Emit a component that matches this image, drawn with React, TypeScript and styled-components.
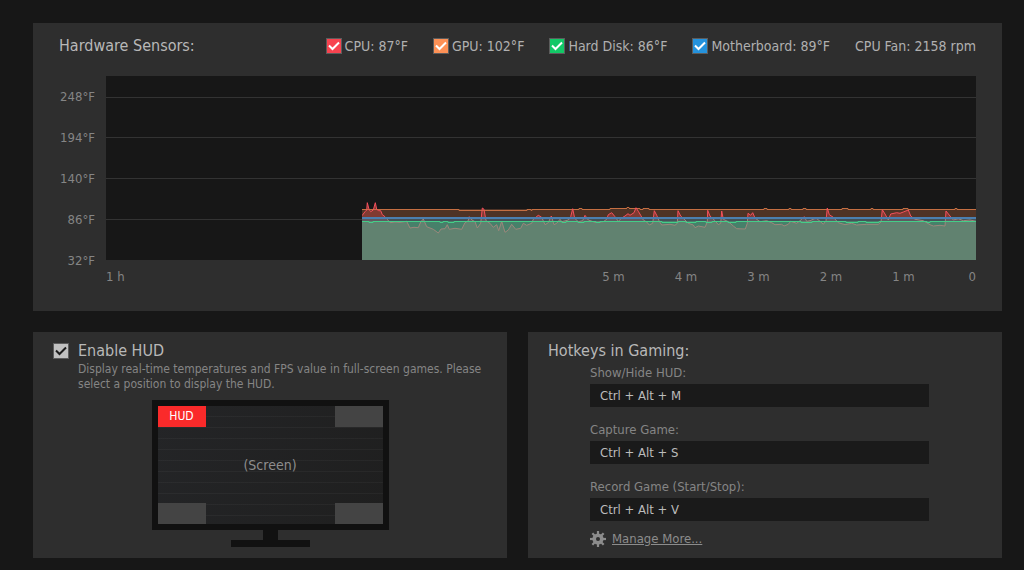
import React, { useState } from "react";
import styled, { createGlobalStyle } from "styled-components";

const GlobalStyle = createGlobalStyle`
  *, *::before, *::after { box-sizing: border-box; }
  body {
    margin: 0;
    background: #171717;
    color: #b0b0b0;
    font-family: "DejaVu Sans Condensed", "Noto Sans", sans-serif;
    font-size: 13px;
    line-height: 16px;
  }
`;

const Page = styled.main`
  display: grid;
  grid-template-columns: 1fr 1fr;
  gap: 21px;
  padding: 23px 22px 12px 33px;
`;

const Panel = styled.section<{ $wide?: boolean }>`
  grid-column: ${(p) => (p.$wide ? "1 / -1" : "auto")};
  background: #2e2e2e;
  padding: ${(p) => (p.$wide ? "12px 26px 26px" : "8px 20px 11px 20px")};
`;

const Title = styled.h2`
  margin: 0;
  font-size: 16px;
  line-height: 22px;
  font-weight: 400;
  color: #b8b8b8;
`;

const SensorHeader = styled.header`
  display: flex;
  align-items: center;
  justify-content: space-between;
  padding-bottom: 19px;
`;

const Legend = styled.div`
  display: flex;
  align-items: center;
  gap: 25px;
  font-size: 14px;
  line-height: 22px;
  white-space: nowrap;
`;

const CheckLabel = styled.label<{ $gap: number }>`
  display: flex;
  align-items: center;
  gap: ${(p) => p.$gap}px;
`;

const CheckCell = styled.span`
  display: grid;
  width: 16px;
  height: 16px;

  & > * {
    grid-area: 1 / 1;
  }
  & > svg {
    pointer-events: none;
  }
`;

const CheckInput = styled.input<{ $color: string }>`
  appearance: none;
  margin: 0;
  width: 16px;
  height: 16px;
  background: ${(p) => p.$color};
  border: 1px solid #5c5c5c;
`;

const ChartGrid = styled.div`
  display: grid;
  grid-template-columns: 36px minmax(0, 1fr);
  column-gap: 11px;
`;

const TempAxis = styled.div`
  display: flex;
  flex-direction: column;
  gap: 25px;
  padding-top: 13px;
  text-align: right;
  white-space: nowrap;
  color: #858585;
`;

const Plot = styled.svg`
  display: block;
  width: 100%;
  height: 184px;
  background: #171717;
`;

const TimeAxis = styled.div`
  grid-column: 2;
  display: grid;
  grid-template-columns: minmax(0, 13fr) repeat(5, minmax(0, 2fr)) minmax(0, 1fr);
  text-align: center;
  color: #858585;

  & > :first-child {
    text-align: left;
  }
  & > :last-child {
    text-align: right;
  }
`;

const Description = styled.p`
  margin: 0 0 8px 25px;
  font-size: 12px;
  line-height: 15px;
  color: #858585;
`;

const Monitor = styled.div`
  display: flex;
  flex-direction: column;
  align-items: center;
`;

const Screen = styled.div`
  display: grid;
  grid-template-columns: 48px 1fr 48px;
  grid-template-rows: 21px 1fr 21px;
  width: 237px;
  height: 130px;
  border: 6px solid #111111;
  background:
    repeating-linear-gradient(transparent 0 10px, rgba(255, 255, 255, 0.035) 10px 11px),
    linear-gradient(110deg, #242527, #1f1f1f);
`;

const Corner = styled.button<{ $row: number; $col: number; $active: boolean }>`
  grid-row: ${(p) => p.$row};
  grid-column: ${(p) => p.$col};
  padding: 0;
  border: 0;
  font: inherit;
  font-size: 12px;
  line-height: 21px;
  color: #ffffff;
  background: ${(p) => (p.$active ? "#fa2a2a" : "#444444")};
`;

const ScreenCaption = styled.span`
  grid-area: 2 / 2;
  align-self: center;
  text-align: center;
  font-size: 14px;
  color: #8e8e8e;
`;

const Neck = styled.div`
  width: 15px;
  height: 10px;
  background: #111111;
`;

const Base = styled.div`
  width: 79px;
  height: 7px;
  background: #111111;
`;

const HotkeyList = styled.div`
  display: flex;
  flex-direction: column;
  gap: 16px;
  padding: 4px 53px 0 42px;
`;

const Field = styled.div`
  display: flex;
  flex-direction: column;
  gap: 4px;
`;

const FieldLabel = styled.label`
  line-height: 14px;
  color: #858585;
`;

const HotkeyInput = styled.input`
  width: 100%;
  height: 23px;
  padding: 0 10px;
  border: 0;
  background: #1a1a1a;
  color: #bcbcbc;
  font: inherit;
`;

const ManageRow = styled.div`
  display: flex;
  align-items: center;
  gap: 6px;
  padding: 10px 0 0 42px;
`;

const ManageLink = styled.a`
  color: #8c8c8c;
  text-decoration: underline;
`;

type Sample = [number, number];

// Samples are kept at three units per chart unit.
const place = (offset: number, samples: Sample[]): Sample[] =>
  samples.map(([x, y]) => [offset + x / 3, 114 + y / 3]);

const cpuTrace: Sample[] = [
  ...place(244, [
    [36, 77], [45, 65], [50, 60], [52, 38], [57, 58], [62, 65], [70, 60], [76, 38], [80, 58], [86, 62],
    [92, 62], [97, 74], [105, 80], [112, 88], [120, 98], [135, 96], [150, 97], [170, 94], [180, 114],
    [192, 112], [205, 113], [212, 96], [220, 87], [230, 110], [240, 114], [250, 118], [265, 129],
    [273, 117], [285, 116], [292, 104], [298, 118], [315, 115], [335, 118], [345, 98], [355, 92],
    [358, 80], [366, 90], [375, 95], [382, 114], [392, 100], [397, 54], [402, 58], [408, 92], [420, 100],
    [430, 112], [440, 104], [446, 122], [455, 94], [465, 127], [475, 120], [485, 103], [497, 118],
    [512, 115], [520, 100], [530, 106], [545, 100], [550, 88], [565, 76], [575, 82], [585, 104],
    [595, 98], [604, 78], [612, 104], [620, 100], [630, 88],
  ]),
  ...place(454, [
    [5, 95], [25, 90], [32, 80], [38, 56], [44, 85], [55, 95], [68, 92], [75, 76], [85, 90], [105, 97],
    [130, 95], [140, 88], [145, 74], [155, 68], [165, 80], [175, 94], [185, 84], [195, 78], [204, 71],
    [210, 76], [222, 68], [228, 53], [235, 64], [242, 76], [250, 90], [260, 96], [268, 105], [278, 100],
    [283, 62], [290, 76], [298, 94], [305, 105], [330, 103], [345, 106], [352, 100], [354, 62],
    [362, 78], [375, 90], [385, 100], [400, 105], [405, 113], [415, 108], [435, 112], [442, 96],
    [443, 61], [450, 78], [465, 92], [475, 104], [482, 100], [485, 63], [490, 88], [505, 95],
    [520, 108], [530, 116], [556, 117], [562, 100], [564, 70], [572, 76], [578, 68], [585, 84],
    [600, 95], [620, 92],
  ]),
  ...place(664, [
    [5, 98], [15, 104], [35, 103], [42, 108], [55, 103], [62, 94], [80, 100], [90, 92], [103, 80],
    [110, 94], [120, 92], [138, 84], [150, 94], [160, 103], [168, 92], [172, 54], [178, 74], [190, 82],
    [205, 98], [225, 104], [245, 100], [260, 105], [290, 103], [325, 103], [333, 96], [337, 59],
    [345, 72], [355, 90], [362, 72], [380, 68], [390, 70], [400, 66], [415, 60], [422, 78], [435, 88],
    [460, 92], [480, 104], [490, 108], [510, 106], [525, 108], [528, 63], [540, 78], [550, 90],
    [565, 86], [580, 92], [600, 90], [618, 94],
  ]),
];

const cpuPoints = cpuTrace.map(([x, y]) => `${x.toFixed(1)},${y.toFixed(1)}`).join(" ");
const cpuArea = `256,184 ${cpuPoints} 870,184`;
const gpuLine =
  "M256 133.5H353V134.5H421V133.5H425V134.5H426V133.5H473V132.5H476V133.5H504V132.5H521V131.5H523V132.5H534V133.5H537V132.5H543V133.5H658V132.5H661V133.5H683V132.5H685V133.5H697V132.5H700V133.5H736V132.5H742V133.5H765V132.5H767V133.5H797V132.5H802V133.5H849V132.5H851V133.5H870";
const diskLine =
  "M256 145.5H263V146.5H267V145.5H334V146.5H337V145.5H342V146.5H348V145.5H456V146.5H460V145.5H472V146.5H478V145.5H490V146.5H494V145.5H556V146.5H572V145.5H580V146.5H590V145.5H600V146.5H606V145.5H622V146.5H630V145.5H695V146.5H706V145.5H740V146.5H752V145.5H760V146.5H773V145.5H821V146.5H824V145.5H870";

function SensorPlot() {
  return (
    <Plot viewBox="0 0 870 184" preserveAspectRatio="none" role="img" aria-label="Sensor temperatures over the last hour">
      <defs>
        <clipPath id="above-board">
          <rect x="256" y="0" width="614" height="142" />
        </clipPath>
        <clipPath id="below-board">
          <rect x="256" y="142" width="614" height="42" />
        </clipPath>
      </defs>
      <g fill="#333333">
        <rect y="21" width="870" height="1" />
        <rect y="61" width="870" height="1" />
        <rect y="102" width="870" height="1" />
        <rect y="143" width="870" height="1" />
      </g>
      <rect x="256" y="133" width="614" height="9" fill="#4e3326" />
      <rect x="256" y="142" width="614" height="3" fill="#455259" />
      <rect x="256" y="145" width="614" height="39" fill="#47806a" />
      <polygon points={cpuArea} fill="#803a32" clipPath="url(#above-board)" />
      <polygon points={cpuArea} fill="rgba(250, 142, 146, 0.15)" clipPath="url(#below-board)" />
      <path d={gpuLine} fill="none" stroke="#c56f42" strokeWidth="1" />
      <polyline points={cpuPoints} fill="none" stroke="#f5505c" strokeWidth="1" clipPath="url(#above-board)" />
      <polyline points={cpuPoints} fill="none" stroke="#9c877c" strokeWidth="1" clipPath="url(#below-board)" />
      <rect x="256" y="141" width="614" height="2" fill="#4b7fb0" />
      <path d={diskLine} fill="none" stroke="#44cd88" strokeWidth="1" />
    </Plot>
  );
}

interface CheckProps {
  label: string;
  color: string;
  mark?: string;
  gap?: number;
  children?: React.ReactNode;
}

function Check({ label, color, mark = "#ffffff", gap = 3, children }: CheckProps) {
  const [checked, setChecked] = useState(true);
  return (
    <CheckLabel $gap={gap}>
      <CheckCell>
        <CheckInput type="checkbox" $color={color} checked={checked} onChange={() => setChecked(!checked)} />
        {checked && (
          <svg width="16" height="16" viewBox="0 0 16 16" fill="none" stroke={mark} strokeWidth="2" aria-hidden="true">
            <path d="M3 7.5 L6.5 11 L13 4.5" />
          </svg>
        )}
      </CheckCell>
      {children ?? label}
    </CheckLabel>
  );
}

const sensors = [
  { label: "CPU: 87°F", color: "#f7434f" },
  { label: "GPU: 102°F", color: "#fd9156" },
  { label: "Hard Disk: 86°F", color: "#12c866" },
  { label: "Motherboard: 89°F", color: "#2592dc" },
];

const temps = ["248°F", "194°F", "140°F", "86°F", "32°F"];
const times = ["1 h", "5 m", "4 m", "3 m", "2 m", "1 m", "0"];

const corners = [
  { name: "Top left", row: 1, col: 1 },
  { name: "Top right", row: 1, col: 3 },
  { name: "Bottom left", row: 3, col: 1 },
  { name: "Bottom right", row: 3, col: 3 },
];

const hotkeys = [
  { id: "hud", label: "Show/Hide HUD:", keys: "Ctrl + Alt + M" },
  { id: "capture", label: "Capture Game:", keys: "Ctrl + Alt + S" },
  { id: "record", label: "Record Game (Start/Stop):", keys: "Ctrl + Alt + V" },
];

function GearIcon() {
  return (
    <svg width="16" height="16" viewBox="0 0 16 16" aria-hidden="true">
      <g fill="#8c8c8c">
        {[0, 45, 90, 135].map((angle) => (
          <rect key={angle} x="6.9" y="0" width="2.2" height="16" transform={`rotate(${angle} 8 8)`} />
        ))}
        <circle cx="8" cy="8" r="5.6" />
      </g>
      <circle cx="8" cy="8" r="2" fill="#2e2e2e" />
    </svg>
  );
}

export default function App() {
  const [position, setPosition] = useState("Top left");

  return (
    <>
      <GlobalStyle />
      <Page>
        <Panel $wide>
          <SensorHeader>
            <Title>Hardware Sensors:</Title>
            <Legend>
              {sensors.map((s) => (
                <Check key={s.label} label={s.label} color={s.color} />
              ))}
              <span>CPU Fan: 2158 rpm</span>
            </Legend>
          </SensorHeader>
          <ChartGrid>
            <TempAxis>
              {temps.map((t) => (
                <span key={t}>{t}</span>
              ))}
            </TempAxis>
            <SensorPlot />
            <TimeAxis>
              {times.map((t) => (
                <span key={t}>{t}</span>
              ))}
            </TimeAxis>
          </ChartGrid>
        </Panel>

        <Panel>
          <Check label="Enable HUD" color="#c0c0c0" mark="#1c1c1c" gap={9}>
            <Title>Enable HUD</Title>
          </Check>
          <Description>
            Display real-time temperatures and FPS value in full-screen games. Please select a position to display the HUD.
          </Description>
          <Monitor>
            <Screen>
              {corners.map((c) => (
                <Corner
                  key={c.name}
                  type="button"
                  $row={c.row}
                  $col={c.col}
                  $active={position === c.name}
                  aria-label={position === c.name ? undefined : c.name}
                  onClick={() => setPosition(c.name)}
                >
                  {position === c.name ? "HUD" : null}
                </Corner>
              ))}
              <ScreenCaption>(Screen)</ScreenCaption>
            </Screen>
            <Neck />
            <Base />
          </Monitor>
        </Panel>

        <Panel>
          <Title>Hotkeys in Gaming:</Title>
          <HotkeyList>
            {hotkeys.map((h) => (
              <Field key={h.id}>
                <FieldLabel htmlFor={h.id}>{h.label}</FieldLabel>
                <HotkeyInput id={h.id} type="text" defaultValue={h.keys} />
              </Field>
            ))}
          </HotkeyList>
          <ManageRow>
            <GearIcon />
            <ManageLink href="#hotkeys">Manage More...</ManageLink>
          </ManageRow>
        </Panel>
      </Page>
    </>
  );
}
